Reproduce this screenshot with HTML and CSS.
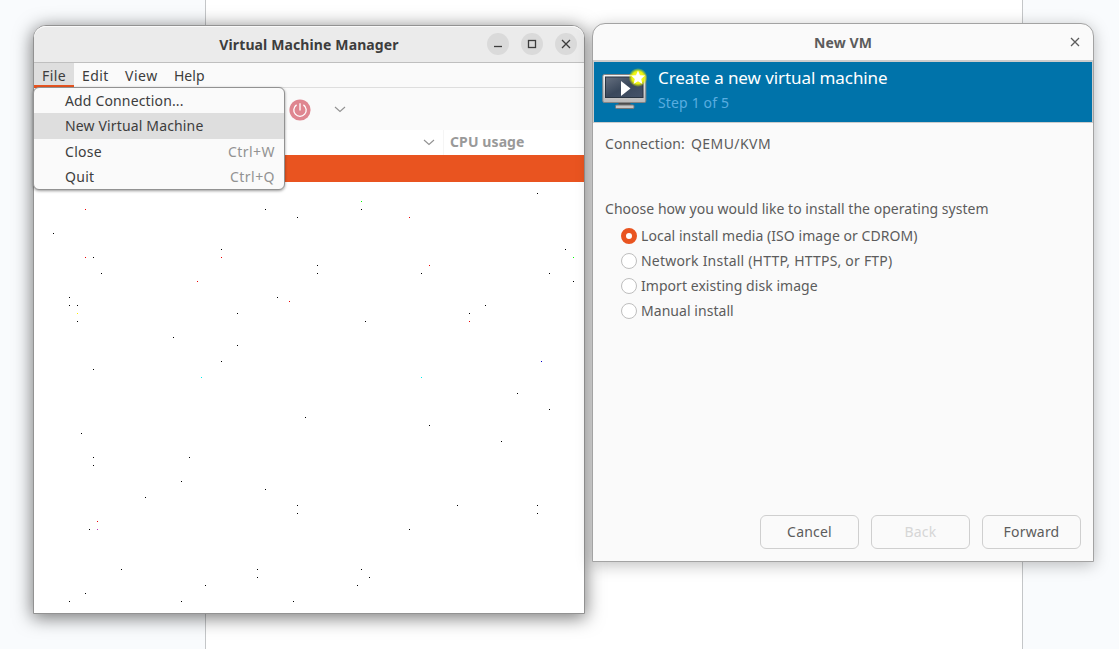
FILE: index.html
```html
<!DOCTYPE html>
<html lang="en">
<head>
<meta charset="utf-8">
<title>Virtual Machine Manager</title>
<link rel="stylesheet" href="styles.css">
</head>
<body>
<div class="desktop">
  <div class="sheet"></div>

  <section class="window manager">
    <header class="titlebar">
      <h1 class="title t-manager">Virtual Machine Manager</h1>
      <div class="controls">
        <span class="control"><svg width="22" height="22"><path d="M7 13.5h8" /></svg></span>
        <span class="control"><svg width="22" height="22"><rect x="7.5" y="7.5" width="7" height="7"/></svg></span>
        <span class="control"><svg width="22" height="22"><path d="M7 7l8 8M15 7l-8 8"/></svg></span>
      </div>
    </header>
    <nav class="menubar">
      <span class="menu open"><span class="t-file">File</span></span>
      <span class="menu"><span class="t-edit">Edit</span></span>
      <span class="menu"><span class="t-view">View</span></span>
      <span class="menu"><span class="t-help">Help</span></span>
    </nav>
    <div class="toolbar">
      <svg class="power" width="22" height="22" viewBox="0 0 22 22"><circle cx="11" cy="11" r="10.6" fill="#df8690"/><path d="M7.6 5.9a6.2 6.2 0 1 0 6.8 0M11 4.2v7.2" fill="none" stroke="#fff" stroke-width="1.3"/></svg>
      <svg class="chev" width="12" height="7" viewBox="0 0 12 7"><path d="M1 1l5 4.500 5-4.500"/></svg>
    </div>
    <div class="columns">
      <div class="col-name"><svg class="chev" width="12" height="7" viewBox="0 0 12 7"><path d="M1 1l5 4.500 5-4.500"/></svg></div>
      <div class="col-cpu"><span class="t-cpu">CPU usage</span></div>
    </div>
    <div class="selected-row"></div>
    <svg class="list" width="550" height="431" viewBox="34 182 550 431" shape-rendering="crispEdges">
      <path stroke="#000" d="M265 209.500h1M297 217.500h1M53 233.500h1M221 249.500h1M93 257.500h1M101 273.500h1M69 297.500h1M69 305.500h1M77 305.500h1M77 321.500h1M277 297.500h1M237 313.500h1M173 337.500h1M237 345.500h1M221 361.500h1M93 369.500h1M361 209.500h1M537 193.500h1M565 249.500h1M317 265.500h1M317 273.500h1M421 273.500h1M549 273.500h1M573 281.500h1M485 305.500h1M469 313.500h1M365 321.500h1M517 393.500h1M305 417.500h1M81 433.500h1M93 457.500h1M93 465.500h1M189 457.500h1M181 481.500h1M265 489.500h1M145 497.500h1M297 505.500h1M297 513.500h1M89 529.500h1M121 569.500h1M257 569.500h1M257 577.500h1M205 585.500h1M85 593.500h1M69 601.500h1M181 601.500h1M293 601.500h1M549 409.500h1M429 425.500h1M501 441.500h1M457 505.500h1M537 505.500h1M537 513.500h1M409 529.500h1M361 569.500h1M369 577.500h1M357 585.500h1"/>
      <path stroke="#e00" d="M85 209.500h1M221 257.500h1M85 257.500h1M197 281.500h1M289 301.500h1M409 217.500h1M429 265.500h1M469 321.500h1M97 521.500h1"/>
      <path stroke="#0f0" d="M361 201.500h1M573 257.500h1"/>
      <path stroke="#0ee" d="M201 377.500h1M421 377.500h1"/>
      <path stroke="#fe0" d="M77 313.500h1"/>
      <path stroke="#00c" d="M541 361.500h1"/>
      <path stroke="#b3b" d="M97 529.500h1"/>
    </svg>
    <div class="popup">
      <div class="item"><span class="t-add">Add Connection...</span></div>
      <div class="item active"><span class="t-new">New Virtual Machine</span></div>
      <div class="item"><span class="t-close">Close</span><span class="key t-cw">Ctrl+W</span></div>
      <div class="item"><span class="t-quit">Quit</span><span class="key t-cq">Ctrl+Q</span></div>
    </div>
  </section>

  <section class="window wizard">
    <header class="titlebar">
      <h2 class="title t-newvm">New VM</h2>
      <svg class="close" width="22" height="22"><path d="M7 7l8 8M15 7l-8 8"/></svg>
    </header>
    <div class="banner">
      <svg width="46" height="42" viewBox="0 0 46 42">
        <defs>
          <linearGradient id="frame" x1="0" y1="0" x2="0" y2="1"><stop offset="0" stop-color="#f4f4f4"/><stop offset="1" stop-color="#b9b9b9"/></linearGradient>
          <linearGradient id="screen" x1="0" y1="0" x2="1" y2="1"><stop offset="0" stop-color="#667080"/><stop offset=".5" stop-color="#3a485b"/><stop offset="1" stop-color="#45536a"/></linearGradient>
          <radialGradient id="glow"><stop offset="0" stop-color="#ffff60"/><stop offset=".65" stop-color="#eaf20a"/><stop offset="1" stop-color="#d8ee00" stop-opacity="0"/></radialGradient>
        </defs>
        <path d="M17 34h11l1 4H16z" fill="#4d4d4d"/>
        <rect x="13.500" y="37" width="18.500" height="3.500" rx="1" fill="#c6c6c6" stroke="#777"/>
        <rect x=".8" y="6.500" width="43" height="28" rx="1.500" fill="url(#frame)" stroke="#858585"/>
        <rect x="3.500" y="9" width="37.500" height="20.500" fill="url(#screen)" stroke="#2a3542"/>
        <path d="M19 13v15l9.500-7.500z" fill="#fff"/>
        <circle cx="36" cy="9.500" r="9.500" fill="url(#glow)"/>
        <path d="M36 2.500l2 4.700 5 .4-3.800 3.400 1.200 5-4.400-2.700-4.400 2.700 1.200-5L29 7.600l5-.4z" fill="#fff"/>
      </svg>
      <div class="banner-text">
        <div class="heading t-create">Create a new virtual machine</div>
        <div class="step t-step">Step 1 of 5</div>
      </div>
    </div>
    <div class="body">
      <div class="connection"><span class="t-conn">Connection:</span><span class="t-qemu">QEMU/KVM</span></div>
      <div class="prompt"><span class="t-choose">Choose how you would like to install the operating system</span></div>
      <div class="option"><i class="radio on"></i><span class="t-local">Local install media (ISO image or CDROM)</span></div>
      <div class="option"><i class="radio"></i><span class="t-net">Network Install (HTTP, HTTPS, or FTP)</span></div>
      <div class="option"><i class="radio"></i><span class="t-import">Import existing disk image</span></div>
      <div class="option"><i class="radio"></i><span class="t-manual">Manual install</span></div>
    </div>
    <footer class="actions">
      <span class="button"><span class="t-cancel">Cancel</span></span>
      <span class="button disabled"><span class="t-back">Back</span></span>
      <span class="button"><span class="t-forward">Forward</span></span>
    </footer>
  </section>
</div>
</body>
</html>
```
FILE: styles.css
```css
* { box-sizing: border-box; }
body { margin: 0; font: 14px/20px "Noto Sans", "Open Sans", sans-serif; }
svg { display: block; flex: none; }
span { white-space: nowrap; }

.desktop { position: relative; width: 1119px; height: 649px; overflow: hidden; background: #f9fbfd; }
.sheet { width: 818px; height: 649px; margin-left: 205px; background: #fff; border: solid #c4c6c8; border-width: 0 1px; }

.window { position: absolute; display: flex; flex-direction: column; border: 1px solid #929292; border-radius: 13px 13px 0 0; }
.manager { left: 33px; top: 25px; width: 552px; height: 589px; background: #fff; color: #3d3d3d; box-shadow: 0 3px 18px 1px rgba(0,0,0,.52); }
.wizard { left: 592px; top: 23px; width: 502px; height: 539px; background: #fafafa; color: #5c5c5c; border-color: #a3a3a3; box-shadow: 0 3px 16px rgba(0,0,0,.26); }
.title { margin: 0; font-size: 14px; line-height: 20px; font-weight: 700; }
.t-manager { letter-spacing: .12px; }

.manager .titlebar { position: relative; display: flex; justify-content: center; height: 37px; padding-top: 9px; background: #ebebeb; border-bottom: 1px solid #bfbfbf; border-radius: 12px 12px 0 0; box-shadow: inset 0 1px #fafafa; }
.controls { position: absolute; right: 7px; top: 7px; display: flex; gap: 12px; }
.control { width: 22px; height: 22px; border-radius: 50%; background: #dadada; }
.control svg, .close { fill: none; stroke: #3d3d3d; stroke-width: 1.3; }

.menubar { display: flex; height: 25px; background: #fafafa; border-bottom: 1px solid #dedede; }
.menu { padding: 3px 8px 0; height: 25px; }
.menu.open { width: 40px; background: #dedede; border-bottom: 3px solid #e95420; letter-spacing: .4px; }
.menu:nth-child(2) { width: 43px; letter-spacing: .4px; }
.menu:nth-child(3) { width: 49px; letter-spacing: .5px; }

.toolbar { display: flex; align-items: center; gap: 23px; height: 42px; padding: 1px 0 0 255px; background: #fafafa; }
.chev { fill: none; stroke: #929292; stroke-width: 1.1; }
.columns { display: flex; height: 25px; color: #999; font-weight: 700; }
.col-name { display: flex; align-items: center; justify-content: flex-end; width: 410px; padding-right: 8px; border-right: 1px solid #f5f5f5; }
.col-cpu { padding: 2px 6px; }
.t-cpu { letter-spacing: .1px; }
.selected-row { height: 27px; background: #e95420; }

.popup { position: absolute; left: -1px; top: 61px; width: 252px; height: 103px; padding: 0; border: 1px solid #929292; border-radius: 6px; background: #fafafa; box-shadow: 0 1px 3px rgba(0,0,0,.4); }
.item { display: flex; justify-content: space-between; height: 25px; padding: 3px 9px 0 31px; letter-spacing: .15px; }
.item.active { height: 26px; background: #dedede; }
.key { color: #929292; letter-spacing: .45px; }
.t-close, .t-quit { letter-spacing: .3px; }

.wizard .titlebar { position: relative; display: flex; justify-content: center; height: 36px; padding-top: 9px; }
.t-newvm { letter-spacing: .1px; }
.close { position: absolute; right: 7px; top: 7px; stroke: #5c5c5c; }
.banner { display: flex; gap: 10px; height: 63px; padding: 6px 0 0 8px; background: #0073aa; border: 1px solid #ccc; border-top-width: 2px; color: #fff; }
.heading { font-size: 17px; line-height: 24px; margin-top: -2px; white-space: nowrap; letter-spacing: -.08px; }
.step { margin-top: 3px; color: #59ade0; letter-spacing: .15px; }
.body { flex: 1; padding: 11px 12px 0; }
.connection { display: flex; gap: 6px; height: 65px; }
.t-conn { letter-spacing: .1px; }
.t-qemu { letter-spacing: .45px; }
.prompt { height: 24px; letter-spacing: .03px; }
.option { display: flex; align-items: center; gap: 4px; height: 25px; padding-left: 16px; letter-spacing: .05px; }
.t-net { letter-spacing: .21px; }
.radio { width: 16px; height: 16px; flex: none; border: 1px solid #bebebe; border-radius: 50%; background: #fff; }
.radio.on { border: 5px solid #e95420; }
.actions { display: flex; justify-content: flex-end; gap: 12px; padding: 0 12px 12px; }
.button { display: flex; align-items: center; justify-content: center; width: 99px; height: 34px; border: 1px solid #cfcfcf; border-radius: 6px; letter-spacing: .2px; }
.disabled { color: #d6d6d6; }
```
